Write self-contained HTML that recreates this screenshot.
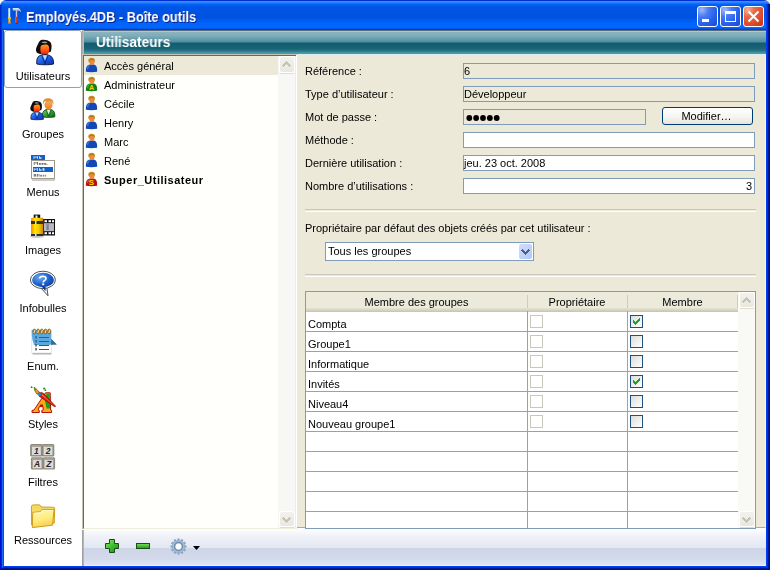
<!DOCTYPE html>
<html><head><meta charset="utf-8">
<style>
*{margin:0;padding:0;box-sizing:border-box}
html,body{width:770px;height:570px;overflow:hidden;background:#fff}
body{position:relative;font-family:"Liberation Sans",sans-serif;font-size:11px;color:#000}
.a{position:absolute}
svg{position:absolute;overflow:visible}
#win{left:0;top:8px;width:770px;height:562px;background:#0a52e0}
#crn{left:762px;top:0;width:8px;height:8px;background:#f2eed8}
#title{left:0;top:0;width:770px;height:30px;border-radius:6px 6px 0 0;background:linear-gradient(#0030d0 0px,#0030d0 1px,#3a8cff 1px,#3a8cff 2px,#2a80ff 2px,#2a80ff 3px,#1070ff 3px,#1070ff 4px,#0062f6 4px,#0062f6 5px,#005cee 5px,#005cee 6px,#0058e8 6px,#0058e8 7px,#0054e4 7px,#0054e4 12px,#0052e2 12px,#0052e2 18px,#0056e6 18px,#0056e6 19px,#005cf0 19px,#005cf0 22px,#0062f8 22px,#0062f8 23px,#0066fc 23px,#0066fc 27px,#0066fc 27px,#0066fc 28px,#0056ee 28px,#0056ee 29px,#0040d4 29px,#0040d4 30px)}
#ttxt{left:26px;top:9px;color:#fff;font-weight:bold;font-size:14.5px;text-shadow:1px 1px 0 #0a1e8a;white-space:nowrap;transform:scaleX(0.88);transform-origin:0 0}
#lb{left:0;top:30px;width:4px;height:540px;clip-path:polygon(0 0,4px 0,4px 536px,0 540px);background:linear-gradient(90deg,#0010d0 0,#0010d0 1px,#0828d0 1px,#0828d0 2px,#1a6af0 2px,#1a6af0 3px,#0050e0 3px)}
#rb{left:766px;top:4px;width:4px;height:566px;clip-path:polygon(0 0,4px 0,4px 566px,0 562px);background:linear-gradient(90deg,#0040f0 0,#0040f0 1px,#0030d8 1px,#0030d8 2px,#001898 2px,#001898 3px,#000c80 3px)}
#bb{left:0;top:566px;width:770px;height:4px;background:linear-gradient(#0040f0 0,#0040f0 1px,#0030d0 1px,#0030d0 2px,#001890 2px,#001890 3px,#001080 3px)}
#side{left:4px;top:30px;width:78px;height:536px;background:#fff}
#sel{left:4px;top:30px;width:78px;height:58px;border:1px solid #8aa4bc;border-radius:3px;background:#fff}
.sl{width:78px;text-align:center;left:4px;font-size:11px}
#vsep{left:82px;top:30px;width:2px;height:536px;background:linear-gradient(90deg,#b0aca8 0,#b0aca8 1px,#bcb8b0 1px)}
#hdr{left:84px;top:30px;width:682px;height:24px;
background:linear-gradient(#5a6a78 0,#5a6a78 1px,#b8c6c8 1px,#b8c6c8 2px,#8ab4c0 2px,#7eacb8 6px,#4e8ea0 12px,#135c70 13px,#1a6478 19px,#2a7888 21px,#4a9aa8 23px,#40a0b8 24px)}
#htxt{left:96px;top:34px;color:#fff;font-weight:bold;font-size:14px;white-space:nowrap;transform:scaleX(0.975);transform-origin:0 0}
#list{left:82px;top:54px;width:215px;height:475px;background:#fffffc;border-top:1px solid #c4c0b2;border-left:1px solid #c4c0b2}
#list2{left:83px;top:55px;width:214px;height:474px;border-top:1px solid #6e685c;border-left:1px solid #6e685c;border-bottom:1px solid #f0ecdc}
#hl{left:297px;top:54px;width:469px;height:1px;background:#d8ecec}
#rsel{left:84px;top:56px;width:194px;height:19px;background:#ece9d8}
.li{left:104px;white-space:nowrap}
#sb{left:278px;top:56px;width:18px;height:472px;background:linear-gradient(90deg,#f7f7f6 0,#f7f7f6 17px,#eeede0 17px)}
#wl{left:296px;top:55px;width:1px;height:473px;background:#fff}
#form{left:297px;top:55px;width:469px;height:473px;background:#ece9d8;border-bottom:1px solid #a8a8b0;border-right:1px solid #fff4d8}
.lab{left:305px;white-space:nowrap}
.fld{left:463px;width:292px;height:16px;border:1px solid #7f9db9;background:#fff;padding-left:0;line-height:14px;white-space:nowrap}
.dis{background:#ece9d8}
.sep{left:305px;width:451px;height:3px;border-top:1px solid #ccc8b8;border-bottom:1px solid #fff}
#btn{left:662px;top:107px;width:91px;height:18px;border:1px solid #003c74;border-radius:3px;background:linear-gradient(#fff,#f4f4f0 60%,#e6e4dc);text-align:center;line-height:16px;padding-right:2px}
#dd{left:325px;top:242px;width:209px;height:19px;border:1px solid #7f9db9;background:#fff;padding-left:2px;line-height:17px}
#ddb{left:519px;top:244px;width:13px;height:15px;border-radius:2px;background:linear-gradient(135deg,#d0dcfc,#b4c8f8)}
#tbl{left:305px;top:291px;width:451px;height:238px;border:1px solid #7f9db9;background:#fff}
#th{left:306px;top:292px;width:432px;height:20px;background:linear-gradient(#ebeadb 0,#ebeadb 16px,#e4e0d0 16px,#e4e0d0 17px,#dcd8c6 17px,#dcd8c6 18px,#d4d0be 18px,#d4d0be 19px,#cbc7b5 19px)}
.tc{text-align:center;white-space:nowrap}
.rl{left:306px;width:432px;height:1px;background:#a0a0a0}
.cl{top:311px;width:1px;height:217px;background:#a0a0a0}
.td{left:308px;white-space:nowrap}
#tb{left:84px;top:528px;width:682px;height:38px;background:linear-gradient(#fdfdfe 0,#fbfcfd 2px,#f0f2f8 8px,#e4e8f2 19px,#e2e6f2 20px,#cdd5e6 20px,#d2d9ea 30px,#dfe4f2 37px,#f0f0f8 37px)}
.tbtn{width:21px;height:21px;border:1px solid #fff;border-radius:3px}
.sl,.li,.lab,.fld,.tc,.td,#btn,#dd,#ttxt,#htxt{will-change:transform}
.cbd{width:13px;height:13px;border:1px solid #cac8bb;background:#fff}
.cbe{width:13px;height:13px;border:1px solid #1c5180;background:linear-gradient(135deg,#dcdcd7,#fff)}
</style></head><body>
<div id="crn" class="a"></div><div id="win" class="a"></div>
<div id="title" class="a"></div>
<svg style="left:0;top:0" width="30" height="30">
<rect x="8.6" y="8.2" width="1.6" height="9" fill="#e0e0ea"/>
<rect x="8.6" y="8.2" width="0.7" height="9" fill="#ffffff"/>
<path d="M7.9 17 H10.9 V18.6 L10.4 19.2 V22.6 L10.9 23.6 H7.9 L8.4 22.6 V19.2 L7.9 18.6Z" fill="#ffc800"/>
<rect x="7.9" y="22.6" width="3" height="1" fill="#e06000"/>
<path d="M12.8 8.2 H18.6 Q20.8 8.8 20.8 12.2 Q19.8 10.6 18.2 10.6 H17.2 V17 H15.8 V10.6 H12.8Z" fill="#c8c8d4"/>
<rect x="12.8" y="8.2" width="5.8" height="0.8" fill="#f0f0f8"/>
<rect x="15.2" y="16.8" width="2.8" height="6.8" fill="#e02808"/>
<rect x="15.2" y="16.8" width="1" height="6.8" fill="#ff5030"/>
<rect x="15.2" y="22.8" width="2.8" height="0.8" fill="#901000"/>
</svg>
<div id="ttxt" class="a">Employés.4DB - Boîte outils</div>
<div class="a tbtn" style="left:697px;top:6px;background:radial-gradient(circle at 20% 15%,#a0b8fa 0,#4a7cf2 30%,#2a62ec 60%,#1848d8 100%)"></div>
<div class="a" style="left:702px;top:19px;width:7px;height:3px;background:#fff"></div>
<div class="a tbtn" style="left:720px;top:6px;background:radial-gradient(circle at 20% 15%,#a0b8fa 0,#4a7cf2 30%,#2a62ec 60%,#1848d8 100%)"></div>
<div class="a" style="left:725px;top:11px;width:11px;height:11px;border:1px solid #fff;border-top-width:3px"></div>
<div class="a tbtn" style="left:743px;top:6px;background:radial-gradient(circle at 20% 15%,#f8b098 0,#e86a48 30%,#e05030 60%,#c83010 100%)"></div>
<svg style="left:743px;top:6px" width="21" height="21"><path d="M5.5 5.5 L15.5 15.5 M15.5 5.5 L5.5 15.5" stroke="#fff" stroke-width="2"/></svg>
<div class="a" style="left:0;top:5px;width:2px;height:25px;background:linear-gradient(90deg,#0028c8 0,#0028c8 1px,#0040dc 1px)"></div><div id="bb" class="a"></div><div id="lb" class="a"></div><div id="rb" class="a"></div>
<div id="tb" class="a"></div>
<div id="side" class="a"></div>
<div id="sel" class="a"></div>
<div class="a sl" style="top:70px">Utilisateurs</div>
<div class="a sl" style="top:128px">Groupes</div>
<div class="a sl" style="top:186px">Menus</div>
<div class="a sl" style="top:244px">Images</div>
<div class="a sl" style="top:302px">Infobulles</div>
<div class="a sl" style="top:360px">Enum.</div>
<div class="a sl" style="top:418px">Styles</div>
<div class="a sl" style="top:476px">Filtres</div>
<div class="a sl" style="top:534px">Ressources</div>
<svg style="left:27px;top:35px" width="32" height="32"><defs>
<linearGradient id="gface" x1="0" y1="0" x2="0" y2="1"><stop offset="0" stop-color="#ff9a20"/><stop offset="0.6" stop-color="#ff4a10"/><stop offset="1" stop-color="#e80808"/></linearGradient>
<linearGradient id="gbody" x1="0" y1="0" x2="1" y2="1"><stop offset="0" stop-color="#5aa0ff"/><stop offset="0.5" stop-color="#1a5ae8"/><stop offset="1" stop-color="#0a30a8"/></linearGradient>
<linearGradient id="gman" x1="0" y1="0" x2="0" y2="1"><stop offset="0" stop-color="#ffb060"/><stop offset="1" stop-color="#f08020"/></linearGradient>
<linearGradient id="ggreen" x1="0" y1="0" x2="1" y2="1"><stop offset="0" stop-color="#80d080"/><stop offset="0.5" stop-color="#30a030"/><stop offset="1" stop-color="#106010"/></linearGradient>
<linearGradient id="gcan" x1="0" y1="0" x2="1" y2="0"><stop offset="0" stop-color="#ff9000"/><stop offset="0.15" stop-color="#ffa800"/><stop offset="0.3" stop-color="#ffe800"/><stop offset="0.6" stop-color="#f8d000"/><stop offset="1" stop-color="#c88000"/></linearGradient>
<radialGradient id="gbub" cx="0.35" cy="0.35" r="0.8"><stop offset="0" stop-color="#6aaaf0"/><stop offset="0.6" stop-color="#1a5cc8"/><stop offset="1" stop-color="#0a3a98"/></radialGradient>
<linearGradient id="gfold" x1="0" y1="0" x2="0.3" y2="1"><stop offset="0" stop-color="#fff8b0"/><stop offset="0.6" stop-color="#ffec80"/><stop offset="1" stop-color="#f8d050"/></linearGradient>
</defs><g transform="translate(0,0) scale(1.0)">
<path d="M13.6 5.2 C17 4.3 21 5 23 6.8 C24.5 8.3 24.8 11 24.4 13.5 C24.2 15 24 16 23.6 16.8 L21.5 17.5 L13 18.9 C11 18.7 9.3 17.6 9 15.5 C8.8 13.5 9.8 11.5 10.8 9.5 C11.6 7.5 12.4 6 13.6 5.2 Z" fill="#0c0c0c"/>
<path d="M14.4 7.2 C16 6 19.5 6.2 20.5 7.5 C19.5 8.5 16 8.8 14.4 7.2Z" fill="#9a9a9a"/>
<path d="M13.4 13 C13.4 10.5 15 9.6 17 9.8 C18 9.5 19.5 9.3 20.5 9.8 C21.8 10.5 22.2 12 22.2 14 C22.2 18 20.5 20.5 17.8 20.5 C15 20.5 13.4 18 13.4 15Z" fill="url(#gface)"/>
<path d="M9.8 29 C9.5 25 10 22 12.8 20.6 C14.3 19.8 16 19.6 17.8 19.7 C19.5 19.6 21.3 19.8 22.8 20.6 C25.8 22 26.6 25 26.6 29 C23 30 13.5 30 9.8 29Z" fill="url(#gbody)" stroke="#06123a" stroke-width="0.9"/>
<path d="M15.8 20.2 L18 25.5 L20.1 20.2Z" fill="#a8e8ff"/>
<path d="M14.8 20.3 L18 28.8 M21.1 20.3 L18 28.8" stroke="#0a1a70" stroke-width="0.8"/>
</g></svg>
<svg style="left:27px;top:93px" width="32" height="32">
<path d="M15.4 23.8 C15.1 20.5 15.8 18.2 18.2 17 C19.5 16.4 20.5 16.3 21.6 16.3 C22.8 16.3 24 16.4 25.2 17 C27.4 18.2 28 20.5 27.8 23.8 C25 24.6 18.2 24.6 15.4 23.8Z" fill="url(#ggreen)" stroke="#063a08" stroke-width="0.8"/>
<path d="M19.8 16.6 L21.6 21.5 L23.4 16.6Z" fill="#d8f0ff"/>
<path d="M19 16.8 L21.6 23.8 M24.2 16.8 L21.6 23.8" stroke="#0a5010" stroke-width="0.6"/>
<ellipse cx="21.5" cy="11.8" rx="3.8" ry="4.6" fill="url(#gman)" stroke="#c06a10" stroke-width="0.3"/>
<path d="M16.2 11.5 C15.6 8 16.5 5.5 20.5 5.3 C24.8 5 26.8 7.2 26.4 11.5 L25.2 9.5 C24.5 8.5 23.8 8 23 8.2 C21.5 8.8 19.5 8.5 18.2 8 C17.2 8.5 16.8 9.5 16.2 11.5Z" fill="#d89438"/>
<g transform="translate(-3.45,4.45) scale(0.75)">
<path d="M13.6 5.2 C17 4.3 21 5 23 6.8 C24.5 8.3 24.8 11 24.4 13.5 C24.2 15 24 16 23.6 16.8 L21.5 17.5 L13 18.9 C11 18.7 9.3 17.6 9 15.5 C8.8 13.5 9.8 11.5 10.8 9.5 C11.6 7.5 12.4 6 13.6 5.2 Z" fill="#0c0c0c"/>
<path d="M14.4 7.2 C16 6 19.5 6.2 20.5 7.5 C19.5 8.5 16 8.8 14.4 7.2Z" fill="#9a9a9a"/>
<path d="M13.4 13 C13.4 10.5 15 9.6 17 9.8 C18 9.5 19.5 9.3 20.5 9.8 C21.8 10.5 22.2 12 22.2 14 C22.2 18 20.5 20.5 17.8 20.5 C15 20.5 13.4 18 13.4 15Z" fill="url(#gface)"/>
<path d="M9.8 29 C9.5 25 10 22 12.8 20.6 C14.3 19.8 16 19.6 17.8 19.7 C19.5 19.6 21.3 19.8 22.8 20.6 C25.8 22 26.6 25 26.6 29 C23 30 13.5 30 9.8 29Z" fill="url(#gbody)" stroke="#06123a" stroke-width="0.9"/>
<path d="M15.8 20.2 L18 25.5 L20.1 20.2Z" fill="#a8e8ff"/>
<path d="M14.8 20.3 L18 28.8 M21.1 20.3 L18 28.8" stroke="#0a1a70" stroke-width="0.8"/>
</g>
</svg>
<svg style="left:27px;top:151px" width="32" height="32">
<rect x="5" y="28" width="23" height="2" fill="#a8a8a8" opacity="0.6"/>
<rect x="4" y="4" width="14" height="5" fill="#1060c8"/>
<g fill="#d0dcf0"><rect x="6.5" y="5.2" width="1" height="2.6"/><rect x="7.5" y="5.6" width="2.5" height="1"/><rect x="10" y="5.2" width="1" height="2.6"/><rect x="12" y="5.2" width="1" height="2.6"/><rect x="13" y="6.3" width="1.5" height="1.5"/></g>
<rect x="4.5" y="9.5" width="23" height="18" fill="#fff" stroke="#a09a88" stroke-width="1"/>
<g fill="#707070"><rect x="6.7" y="11" width="1" height="2.8"/><rect x="7.7" y="11.4" width="2.3" height="1"/><rect x="10" y="11" width="1" height="2.8"/><rect x="11.8" y="12" width="2" height="1.8"/><rect x="14.5" y="12" width="2" height="1.8"/><rect x="17.2" y="12" width="2" height="1.8"/><rect x="19.5" y="13" width="1" height="0.8"/></g>
<rect x="6" y="16" width="20" height="5" fill="#1060c8"/>
<g fill="#d0dcf0"><rect x="6.7" y="17.2" width="1" height="2.6"/><rect x="7.7" y="17.6" width="2.3" height="1"/><rect x="10" y="17.2" width="1" height="2.6"/><rect x="12" y="17.2" width="1" height="2.6"/><rect x="13" y="18.3" width="1.5" height="1.5"/><rect x="15.5" y="17.2" width="2" height="2.6"/></g>
<g fill="#808080"><rect x="6.7" y="23" width="2.6" height="2.6"/><rect x="10" y="23" width="1" height="2.6"/><rect x="11.5" y="23" width="1" height="2.6"/><rect x="13.2" y="23.8" width="1.8" height="1.8"/><rect x="15.8" y="23.8" width="1.6" height="1.8"/><rect x="18.2" y="23.8" width="1" height="1.8"/></g>
</svg>
<svg style="left:27px;top:209px" width="32" height="32">
<ellipse cx="10" cy="27.5" rx="7" ry="1.5" fill="#a0a0a0" opacity="0.6"/>
<rect x="16" y="10" width="12" height="16.5" fill="#101010"/>
<rect x="17.5" y="11.2" width="2.5" height="2" fill="#fff"/><rect x="21.5" y="11.2" width="2.5" height="2" fill="#fff"/><rect x="25" y="11.2" width="2" height="2" fill="#fff"/>
<rect x="17.5" y="23.2" width="2.5" height="2" fill="#fff"/><rect x="21.5" y="23.2" width="2.5" height="2" fill="#fff"/><rect x="25" y="23.2" width="2" height="2" fill="#fff"/>
<rect x="17" y="14.2" width="10" height="8" fill="#b8b8b8"/>
<rect x="19.5" y="15" width="2.2" height="6" fill="#6080c0"/><circle cx="20.5" cy="15.8" r="1" fill="#e07070"/>
<rect x="6.7" y="5.6" width="6.5" height="3.6" fill="#101010"/>
<rect x="8.5" y="6.5" width="2" height="2.5" fill="#e8e8e8"/>
<rect x="4" y="8.7" width="12.3" height="18.3" rx="1" fill="url(#gcan)"/>
<rect x="4" y="12" width="12.3" height="3" fill="#303030"/>
<rect x="8" y="12" width="1.5" height="3" fill="#e0e0e0"/>
<rect x="4" y="25" width="12.3" height="2" fill="#303030"/>
<rect x="8" y="25" width="1.5" height="2" fill="#e0e0e0"/>
</svg>
<svg style="left:27px;top:267px" width="32" height="32">
<path d="M13.5 20.5 L21 28.8 L19.8 20Z" fill="#fff" stroke="#505050" stroke-width="1"/>
<ellipse cx="15.9" cy="12.9" rx="12.5" ry="8.7" fill="#fff" stroke="#505050" stroke-width="1"/>
<ellipse cx="16" cy="13" rx="11" ry="7.2" fill="url(#gbub)"/>
<path d="M15 19.8 L18.6 24.5 L18.5 19.8Z" fill="#0a3a98"/>
<path d="M12.6 11.6 C12.6 8.8 19 8.5 19 11.4 C19 13.5 16.2 13.4 16.2 15.5" fill="none" stroke="#fff" stroke-width="1.6"/>
<rect x="15.2" y="16.4" width="2" height="1.8" fill="#fff"/>
</svg>
<svg style="left:27px;top:325px" width="32" height="32">
<rect x="5.5" y="28" width="19" height="1.5" fill="#909090" opacity="0.7"/>
<rect x="4.8" y="5" width="19.4" height="23" fill="#fff" stroke="#d0d0d0" stroke-width="0.5"/>
<path d="M4.8 5 H24.2 V14 L29.8 19.5 H24 L22 20 H7 Q5 15 4.8 10Z" fill="#5aaae0"/>
<path d="M24.2 14 L29.8 19.5 L24 19.8Z" fill="#3a6a90"/>
<g fill="#d89018" stroke="#6a4000" stroke-width="0.5">
<rect x="6.2" y="4" width="2.4" height="5" rx="1.2"/><rect x="9.9" y="4" width="2.4" height="5" rx="1.2"/><rect x="13.6" y="4" width="2.4" height="5" rx="1.2"/><rect x="17.3" y="4" width="2.4" height="5" rx="1.2"/><rect x="21" y="4" width="2.4" height="5" rx="1.2"/>
</g>
<g stroke="#fff0c0" stroke-width="0.8">
<path d="M6.8 8 L8.2 5"/><path d="M10.5 8 L11.9 5"/><path d="M14.2 8 L15.6 5"/><path d="M17.9 8 L19.3 5"/><path d="M21.6 8 L23 5"/>
</g>
<rect x="12" y="12" width="10" height="0.9" fill="#1a5a90"/>
<rect x="12" y="16" width="10" height="0.9" fill="#1a5a90"/>
<rect x="12" y="20" width="10" height="0.9" fill="#404040"/>
<rect x="12" y="24" width="10" height="0.9" fill="#404040"/>
<rect x="8.3" y="11" width="1.5" height="2.5" fill="#2a6a9a"/><rect x="8.3" y="15" width="1.5" height="2.5" fill="#2a6a9a"/>
<rect x="8.3" y="19" width="1.5" height="2.5" fill="#505050"/><rect x="8.3" y="23" width="1.5" height="2.5" fill="#505050"/>
</svg>
<svg style="left:27px;top:383px" width="32" height="32">
<path d="M5 29.5 L5 27.5 L7 27 L18.5 9.8 L23.2 9.8 L23.6 27 L24.6 27.5 L24.6 29.5 L14.8 29.5 L14.8 27.5 L16.2 27 L16 23.6 L12.4 23.6 L11.2 27 L12.3 27.5 L12.3 29.5Z" fill="#f8a818" stroke="#b00800" stroke-width="0.95" stroke-linejoin="round"/>
<path d="M13.3 21.6 L16 21.6 L16.1 23.6 L12.5 23.6Z" fill="#c00800"/>
<path d="M19.8 10.4 L22.7 10.4 L23.1 25.5 L19.6 25.5 L17.6 16Z" fill="#1aa01a"/>
<path d="M12.4 10.2 C14 8.8 15.5 9.4 17 10.8 L28.8 23.4 L27.6 23.7 L12 13.2Z" fill="#e01808" stroke="#800800" stroke-width="0.6"/>
<path d="M14.2 12 L27.5 23 L15.5 11.2Z" fill="#ff8a70" opacity="0.7"/>
<path d="M11.8 8.6 L14.8 11.3 L12.8 13.4 L10 10.6Z" fill="#1890e0" stroke="#0a4a80" stroke-width="0.4"/>
<path d="M7 4.2 C7.4 7 8.2 9.2 9.6 10.6 C10.6 11.3 11.6 10.9 12.1 9.8 C11.2 7.6 9.6 5.6 7 4.2Z" fill="#e89a20" stroke="#704000" stroke-width="0.6"/>
<path d="M7 4.2 L9.2 6.6 L8 8Z" fill="#30a030"/>
<circle cx="4.6" cy="4.2" r="0.9" fill="#208a20"/>
<circle cx="17.2" cy="5.5" r="1.1" fill="#208a20"/><circle cx="18.4" cy="7.2" r="0.9" fill="#208a20"/>
</svg>
<svg style="left:27px;top:441px" width="32" height="32"><rect x="3.1" y="3.1" width="12.5" height="12.3" rx="1.5" fill="#8e8a7c"/><rect x="4.3" y="4.1" width="10.1" height="2" fill="#a8a496"/><rect x="4.9" y="5.9" width="8.9" height="8.2" fill="#dcdcdc"/><text x="9.3" y="12.9" font-family="Liberation Sans" font-style="italic" font-weight="bold" font-size="8.5" text-anchor="middle" fill="#282828">1</text><rect x="14.8" y="3.1" width="12.5" height="12.3" rx="1.5" fill="#8e8a7c"/><rect x="16.0" y="4.1" width="10.1" height="2" fill="#a8a496"/><rect x="16.6" y="5.9" width="8.9" height="8.2" fill="#dcdcdc"/><text x="21.0" y="12.9" font-family="Liberation Sans" font-style="italic" font-weight="bold" font-size="8.5" text-anchor="middle" fill="#282828">2</text><rect x="3.9" y="16.3" width="12.5" height="12.3" rx="1.5" fill="#8e8a7c"/><rect x="5.1" y="17.3" width="10.1" height="2" fill="#a8a496"/><rect x="5.7" y="19.1" width="8.9" height="8.2" fill="#dcdcdc"/><text x="10.1" y="26.1" font-family="Liberation Sans" font-style="italic" font-weight="bold" font-size="8.5" text-anchor="middle" fill="#282828">A</text><rect x="15.6" y="16.3" width="12.5" height="12.3" rx="1.5" fill="#8e8a7c"/><rect x="16.8" y="17.3" width="10.1" height="2" fill="#a8a496"/><rect x="17.4" y="19.1" width="8.9" height="8.2" fill="#dcdcdc"/><text x="21.8" y="26.1" font-family="Liberation Sans" font-style="italic" font-weight="bold" font-size="8.5" text-anchor="middle" fill="#282828">Z</text></svg>
<svg style="left:27px;top:499px" width="32" height="32">
<path d="M4.6 26 L4.4 7.8 Q4.4 5.9 6.2 5.9 L12 5.8 Q13 5.8 13.6 7 L14.2 8 L26.5 8.2 Q27.8 8.3 27.7 9.8 L27.3 24 Z" fill="#f4d860" stroke="#c89818" stroke-width="0.9"/>
<path d="M5.3 28.6 L5.8 13.4 L13.2 12.8 L14.6 10.8 L27 10.4 L25.6 26.2 Z" fill="url(#gfold)" stroke="#c89410" stroke-width="0.9"/>
<path d="M6.6 14.2 L13.6 13.6 L15 11.6 L26 11.3" fill="none" stroke="#fffce0" stroke-width="0.8"/>
</svg>
<div id="vsep" class="a"></div>
<div id="hdr" class="a"></div>
<div id="htxt" class="a">Utilisateurs</div>
<div id="list" class="a"></div><div id="list2" class="a"></div><div id="hl" class="a"></div>
<div id="rsel" class="a"></div>
<div class="a li" style="top:60px;">Accès général</div>
<svg style="left:84px;top:56px" width="16" height="19">
<path d="M1.9 15.8 C1.5 11.5 2.8 9 5.8 8.4 L9.6 8.4 C12.5 9 13.4 11.5 13.1 15.8 C10 16.3 5 16.3 1.9 15.8Z" fill="#1048b8"/>
<path d="M3 13 C3 10.5 4 9.3 5.8 9 L6.5 9.2 C5 10 4.2 11.5 4.3 13.5Z" fill="#ffffff" opacity="0.25"/>
<ellipse cx="7.6" cy="4.4" rx="3.3" ry="2.6" fill="#c89028"/>
<ellipse cx="7.9" cy="6.1" rx="2.45" ry="2.8" fill="#f08838"/>
<path d="M5.2 4.6 C5.5 3 7 2.6 8.5 2.8 C9.8 3 10.5 3.8 10.6 4.8 L9.5 4.2 C8 3.8 6.5 4 5.2 4.6Z" fill="#b07818"/>
</svg>
<div class="a li" style="top:79px;">Administrateur</div>
<svg style="left:84px;top:75px" width="16" height="19">
<path d="M1.9 15.8 C1.5 11.5 2.8 9 5.8 8.4 L9.6 8.4 C12.5 9 13.4 11.5 13.1 15.8 C10 16.3 5 16.3 1.9 15.8Z" fill="#108010"/>
<path d="M3 13 C3 10.5 4 9.3 5.8 9 L6.5 9.2 C5 10 4.2 11.5 4.3 13.5Z" fill="#ffffff" opacity="0.25"/>
<ellipse cx="7.6" cy="4.4" rx="3.3" ry="2.6" fill="#c89028"/>
<ellipse cx="7.9" cy="6.1" rx="2.45" ry="2.8" fill="#f08838"/>
<path d="M5.2 4.6 C5.5 3 7 2.6 8.5 2.8 C9.8 3 10.5 3.8 10.6 4.8 L9.5 4.2 C8 3.8 6.5 4 5.2 4.6Z" fill="#b07818"/>
<text x="7.5" y="15" font-family="Liberation Sans" font-weight="bold" font-size="7" text-anchor="middle" fill="#ffd000">A</text></svg>
<div class="a li" style="top:98px;">Cécile</div>
<svg style="left:84px;top:94px" width="16" height="19">
<path d="M1.9 15.8 C1.5 11.5 2.8 9 5.8 8.4 L9.6 8.4 C12.5 9 13.4 11.5 13.1 15.8 C10 16.3 5 16.3 1.9 15.8Z" fill="#1048b8"/>
<path d="M3 13 C3 10.5 4 9.3 5.8 9 L6.5 9.2 C5 10 4.2 11.5 4.3 13.5Z" fill="#ffffff" opacity="0.25"/>
<ellipse cx="7.6" cy="4.4" rx="3.3" ry="2.6" fill="#c89028"/>
<ellipse cx="7.9" cy="6.1" rx="2.45" ry="2.8" fill="#f08838"/>
<path d="M5.2 4.6 C5.5 3 7 2.6 8.5 2.8 C9.8 3 10.5 3.8 10.6 4.8 L9.5 4.2 C8 3.8 6.5 4 5.2 4.6Z" fill="#b07818"/>
</svg>
<div class="a li" style="top:117px;">Henry</div>
<svg style="left:84px;top:113px" width="16" height="19">
<path d="M1.9 15.8 C1.5 11.5 2.8 9 5.8 8.4 L9.6 8.4 C12.5 9 13.4 11.5 13.1 15.8 C10 16.3 5 16.3 1.9 15.8Z" fill="#1048b8"/>
<path d="M3 13 C3 10.5 4 9.3 5.8 9 L6.5 9.2 C5 10 4.2 11.5 4.3 13.5Z" fill="#ffffff" opacity="0.25"/>
<ellipse cx="7.6" cy="4.4" rx="3.3" ry="2.6" fill="#c89028"/>
<ellipse cx="7.9" cy="6.1" rx="2.45" ry="2.8" fill="#f08838"/>
<path d="M5.2 4.6 C5.5 3 7 2.6 8.5 2.8 C9.8 3 10.5 3.8 10.6 4.8 L9.5 4.2 C8 3.8 6.5 4 5.2 4.6Z" fill="#b07818"/>
</svg>
<div class="a li" style="top:136px;">Marc</div>
<svg style="left:84px;top:132px" width="16" height="19">
<path d="M1.9 15.8 C1.5 11.5 2.8 9 5.8 8.4 L9.6 8.4 C12.5 9 13.4 11.5 13.1 15.8 C10 16.3 5 16.3 1.9 15.8Z" fill="#1048b8"/>
<path d="M3 13 C3 10.5 4 9.3 5.8 9 L6.5 9.2 C5 10 4.2 11.5 4.3 13.5Z" fill="#ffffff" opacity="0.25"/>
<ellipse cx="7.6" cy="4.4" rx="3.3" ry="2.6" fill="#c89028"/>
<ellipse cx="7.9" cy="6.1" rx="2.45" ry="2.8" fill="#f08838"/>
<path d="M5.2 4.6 C5.5 3 7 2.6 8.5 2.8 C9.8 3 10.5 3.8 10.6 4.8 L9.5 4.2 C8 3.8 6.5 4 5.2 4.6Z" fill="#b07818"/>
</svg>
<div class="a li" style="top:155px;">René</div>
<svg style="left:84px;top:151px" width="16" height="19">
<path d="M1.9 15.8 C1.5 11.5 2.8 9 5.8 8.4 L9.6 8.4 C12.5 9 13.4 11.5 13.1 15.8 C10 16.3 5 16.3 1.9 15.8Z" fill="#1048b8"/>
<path d="M3 13 C3 10.5 4 9.3 5.8 9 L6.5 9.2 C5 10 4.2 11.5 4.3 13.5Z" fill="#ffffff" opacity="0.25"/>
<ellipse cx="7.6" cy="4.4" rx="3.3" ry="2.6" fill="#c89028"/>
<ellipse cx="7.9" cy="6.1" rx="2.45" ry="2.8" fill="#f08838"/>
<path d="M5.2 4.6 C5.5 3 7 2.6 8.5 2.8 C9.8 3 10.5 3.8 10.6 4.8 L9.5 4.2 C8 3.8 6.5 4 5.2 4.6Z" fill="#b07818"/>
</svg>
<div class="a li" style="top:174px;font-weight:bold;letter-spacing:0.5px;">Super_Utilisateur</div>
<svg style="left:84px;top:170px" width="16" height="19">
<path d="M1.9 15.8 C1.5 11.5 2.8 9 5.8 8.4 L9.6 8.4 C12.5 9 13.4 11.5 13.1 15.8 C10 16.3 5 16.3 1.9 15.8Z" fill="#b81010"/>
<path d="M3 13 C3 10.5 4 9.3 5.8 9 L6.5 9.2 C5 10 4.2 11.5 4.3 13.5Z" fill="#ffffff" opacity="0.25"/>
<ellipse cx="7.6" cy="4.4" rx="3.3" ry="2.6" fill="#c89028"/>
<ellipse cx="7.9" cy="6.1" rx="2.45" ry="2.8" fill="#f08838"/>
<path d="M5.2 4.6 C5.5 3 7 2.6 8.5 2.8 C9.8 3 10.5 3.8 10.6 4.8 L9.5 4.2 C8 3.8 6.5 4 5.2 4.6Z" fill="#b07818"/>
<text x="7.5" y="15.3" font-family="Liberation Sans" font-weight="bold" font-size="8" text-anchor="middle" fill="#ffd000">S</text></svg>
<div id="sb" class="a"></div>
<div class="a" style="left:279px;top:56px;width:16px;height:17px;border:1px solid #fff;border-radius:3px;background:linear-gradient(#f2f1ec,#e9e8e0)"></div><div class="a" style="left:280px;top:73px;width:14px;height:1px;background:#e0decf"></div><svg style="left:282px;top:61px" width="9" height="6" shape-rendering="crispEdges"><rect x="4" y="0" width="1" height="1" fill="#c4c2b4"/><rect x="3" y="1" width="1" height="1" fill="#c4c2b4"/><rect x="4" y="1" width="1" height="1" fill="#c4c2b4"/><rect x="5" y="1" width="1" height="1" fill="#c4c2b4"/><rect x="2" y="2" width="1" height="1" fill="#c4c2b4"/><rect x="3" y="2" width="1" height="1" fill="#c4c2b4"/><rect x="4" y="2" width="1" height="1" fill="#c4c2b4"/><rect x="5" y="2" width="1" height="1" fill="#c4c2b4"/><rect x="6" y="2" width="1" height="1" fill="#c4c2b4"/><rect x="1" y="3" width="1" height="1" fill="#c4c2b4"/><rect x="2" y="3" width="1" height="1" fill="#c4c2b4"/><rect x="3" y="3" width="1" height="1" fill="#c4c2b4"/><rect x="5" y="3" width="1" height="1" fill="#c4c2b4"/><rect x="6" y="3" width="1" height="1" fill="#c4c2b4"/><rect x="7" y="3" width="1" height="1" fill="#c4c2b4"/><rect x="0" y="4" width="1" height="1" fill="#c4c2b4"/><rect x="1" y="4" width="1" height="1" fill="#c4c2b4"/><rect x="2" y="4" width="1" height="1" fill="#c4c2b4"/><rect x="6" y="4" width="1" height="1" fill="#c4c2b4"/><rect x="7" y="4" width="1" height="1" fill="#c4c2b4"/><rect x="8" y="4" width="1" height="1" fill="#c4c2b4"/><rect x="1" y="5" width="1" height="1" fill="#c4c2b4"/><rect x="7" y="5" width="1" height="1" fill="#c4c2b4"/></svg>
<div class="a" style="left:279px;top:511px;width:16px;height:16px;border:1px solid #fff;border-radius:3px;background:linear-gradient(#f2f1ec,#e9e8e0)"></div><div class="a" style="left:280px;top:527px;width:14px;height:1px;background:#e0decf"></div><svg style="left:282px;top:517px" width="9" height="6" shape-rendering="crispEdges"><rect x="1" y="0" width="1" height="1" fill="#c4c2b4"/><rect x="7" y="0" width="1" height="1" fill="#c4c2b4"/><rect x="0" y="1" width="1" height="1" fill="#c4c2b4"/><rect x="1" y="1" width="1" height="1" fill="#c4c2b4"/><rect x="2" y="1" width="1" height="1" fill="#c4c2b4"/><rect x="6" y="1" width="1" height="1" fill="#c4c2b4"/><rect x="7" y="1" width="1" height="1" fill="#c4c2b4"/><rect x="8" y="1" width="1" height="1" fill="#c4c2b4"/><rect x="1" y="2" width="1" height="1" fill="#c4c2b4"/><rect x="2" y="2" width="1" height="1" fill="#c4c2b4"/><rect x="3" y="2" width="1" height="1" fill="#c4c2b4"/><rect x="5" y="2" width="1" height="1" fill="#c4c2b4"/><rect x="6" y="2" width="1" height="1" fill="#c4c2b4"/><rect x="7" y="2" width="1" height="1" fill="#c4c2b4"/><rect x="2" y="3" width="1" height="1" fill="#c4c2b4"/><rect x="3" y="3" width="1" height="1" fill="#c4c2b4"/><rect x="4" y="3" width="1" height="1" fill="#c4c2b4"/><rect x="5" y="3" width="1" height="1" fill="#c4c2b4"/><rect x="6" y="3" width="1" height="1" fill="#c4c2b4"/><rect x="3" y="4" width="1" height="1" fill="#c4c2b4"/><rect x="4" y="4" width="1" height="1" fill="#c4c2b4"/><rect x="5" y="4" width="1" height="1" fill="#c4c2b4"/><rect x="4" y="5" width="1" height="1" fill="#c4c2b4"/></svg>
<div id="wl" class="a"></div>
<div id="form" class="a"></div>
<div class="a lab" style="top:65px">Référence :</div>
<div class="a lab" style="top:88px">Type d’utilisateur :</div>
<div class="a lab" style="top:111px">Mot de passe :</div>
<div class="a lab" style="top:134px">Méthode :</div>
<div class="a lab" style="top:157px">Dernière utilisation :</div>
<div class="a lab" style="top:180px">Nombre d’utilisations :</div>
<div class="a fld dis" style="top:63px">6</div>
<div class="a fld dis" style="top:86px">Développeur</div>
<div class="a fld dis" style="top:109px;width:183px"></div>
<svg style="left:465.5px;top:113.5px" width="40" height="8"><circle cx="3.3" cy="4" r="2.9" fill="#000"/><circle cx="10.149999999999999" cy="4" r="2.9" fill="#000"/><circle cx="17.0" cy="4" r="2.9" fill="#000"/><circle cx="23.849999999999998" cy="4" r="2.9" fill="#000"/><circle cx="30.7" cy="4" r="2.9" fill="#000"/></svg>
<div id="btn" class="a">Modifier…</div>
<div class="a fld" style="top:132px"></div>
<div class="a fld" style="top:155px">jeu. 23 oct. 2008</div>
<div class="a fld" style="top:178px;text-align:right;padding-right:2px">3</div>
<div class="a sep" style="top:209px"></div>
<div class="a lab" style="top:222px">Propriétaire par défaut des objets créés par cet utilisateur :</div>
<div id="dd" class="a">Tous les groupes</div>
<div id="ddb" class="a"></div>
<svg style="left:521px;top:249px" width="9" height="6" shape-rendering="crispEdges"><rect x="1" y="0" width="1" height="1" fill="#4d6185"/><rect x="7" y="0" width="1" height="1" fill="#4d6185"/><rect x="0" y="1" width="1" height="1" fill="#4d6185"/><rect x="1" y="1" width="1" height="1" fill="#4d6185"/><rect x="2" y="1" width="1" height="1" fill="#4d6185"/><rect x="6" y="1" width="1" height="1" fill="#4d6185"/><rect x="7" y="1" width="1" height="1" fill="#4d6185"/><rect x="8" y="1" width="1" height="1" fill="#4d6185"/><rect x="1" y="2" width="1" height="1" fill="#4d6185"/><rect x="2" y="2" width="1" height="1" fill="#4d6185"/><rect x="3" y="2" width="1" height="1" fill="#4d6185"/><rect x="5" y="2" width="1" height="1" fill="#4d6185"/><rect x="6" y="2" width="1" height="1" fill="#4d6185"/><rect x="7" y="2" width="1" height="1" fill="#4d6185"/><rect x="2" y="3" width="1" height="1" fill="#4d6185"/><rect x="3" y="3" width="1" height="1" fill="#4d6185"/><rect x="4" y="3" width="1" height="1" fill="#4d6185"/><rect x="5" y="3" width="1" height="1" fill="#4d6185"/><rect x="6" y="3" width="1" height="1" fill="#4d6185"/><rect x="3" y="4" width="1" height="1" fill="#4d6185"/><rect x="4" y="4" width="1" height="1" fill="#4d6185"/><rect x="5" y="4" width="1" height="1" fill="#4d6185"/><rect x="4" y="5" width="1" height="1" fill="#4d6185"/></svg>
<div class="a sep" style="top:274px"></div>
<div id="tbl" class="a"></div>
<div id="th" class="a"></div>
<div class="a tc" style="left:306px;width:221px;top:296px">Membre des groupes</div>
<div class="a tc" style="left:527px;width:100px;top:296px">Propriétaire</div>
<div class="a tc" style="left:627px;width:111px;top:296px">Membre</div>
<div class="a" style="left:527px;top:295px;width:1px;height:13px;background:#d0ccbc"></div>
<div class="a" style="left:627px;top:295px;width:1px;height:13px;background:#d0ccbc"></div>
<div class="a" style="left:737px;top:295px;width:1px;height:13px;background:#d0ccbc"></div>
<div class="a rl" style="top:331px"></div>
<div class="a rl" style="top:351px"></div>
<div class="a rl" style="top:371px"></div>
<div class="a rl" style="top:391px"></div>
<div class="a rl" style="top:411px"></div>
<div class="a rl" style="top:431px"></div>
<div class="a rl" style="top:451px"></div>
<div class="a rl" style="top:471px"></div>
<div class="a rl" style="top:491px"></div>
<div class="a rl" style="top:511px"></div>
<div class="a cl" style="left:527px"></div>
<div class="a cl" style="left:627px"></div>
<div class="a td" style="top:318px">Compta</div>
<div class="a cbd" style="left:530px;top:315px"></div>
<div class="a cbe" style="left:630px;top:315px"></div>
<svg style="left:633px;top:318px" width="7" height="7" shape-rendering="crispEdges"><rect x="6" y="0" width="1" height="1" fill="#21a121"/><rect x="5" y="1" width="1" height="1" fill="#21a121"/><rect x="6" y="1" width="1" height="1" fill="#21a121"/><rect x="0" y="2" width="1" height="1" fill="#21a121"/><rect x="4" y="2" width="1" height="1" fill="#21a121"/><rect x="5" y="2" width="1" height="1" fill="#21a121"/><rect x="6" y="2" width="1" height="1" fill="#21a121"/><rect x="0" y="3" width="1" height="1" fill="#21a121"/><rect x="1" y="3" width="1" height="1" fill="#21a121"/><rect x="3" y="3" width="1" height="1" fill="#21a121"/><rect x="4" y="3" width="1" height="1" fill="#21a121"/><rect x="5" y="3" width="1" height="1" fill="#21a121"/><rect x="0" y="4" width="1" height="1" fill="#21a121"/><rect x="1" y="4" width="1" height="1" fill="#21a121"/><rect x="2" y="4" width="1" height="1" fill="#21a121"/><rect x="3" y="4" width="1" height="1" fill="#21a121"/><rect x="4" y="4" width="1" height="1" fill="#21a121"/><rect x="1" y="5" width="1" height="1" fill="#21a121"/><rect x="2" y="5" width="1" height="1" fill="#21a121"/><rect x="3" y="5" width="1" height="1" fill="#21a121"/><rect x="2" y="6" width="1" height="1" fill="#21a121"/></svg>
<div class="a td" style="top:338px">Groupe1</div>
<div class="a cbd" style="left:530px;top:335px"></div>
<div class="a cbe" style="left:630px;top:335px"></div>
<div class="a td" style="top:358px">Informatique</div>
<div class="a cbd" style="left:530px;top:355px"></div>
<div class="a cbe" style="left:630px;top:355px"></div>
<div class="a td" style="top:378px">Invités</div>
<div class="a cbd" style="left:530px;top:375px"></div>
<div class="a cbe" style="left:630px;top:375px"></div>
<svg style="left:633px;top:378px" width="7" height="7" shape-rendering="crispEdges"><rect x="6" y="0" width="1" height="1" fill="#21a121"/><rect x="5" y="1" width="1" height="1" fill="#21a121"/><rect x="6" y="1" width="1" height="1" fill="#21a121"/><rect x="0" y="2" width="1" height="1" fill="#21a121"/><rect x="4" y="2" width="1" height="1" fill="#21a121"/><rect x="5" y="2" width="1" height="1" fill="#21a121"/><rect x="6" y="2" width="1" height="1" fill="#21a121"/><rect x="0" y="3" width="1" height="1" fill="#21a121"/><rect x="1" y="3" width="1" height="1" fill="#21a121"/><rect x="3" y="3" width="1" height="1" fill="#21a121"/><rect x="4" y="3" width="1" height="1" fill="#21a121"/><rect x="5" y="3" width="1" height="1" fill="#21a121"/><rect x="0" y="4" width="1" height="1" fill="#21a121"/><rect x="1" y="4" width="1" height="1" fill="#21a121"/><rect x="2" y="4" width="1" height="1" fill="#21a121"/><rect x="3" y="4" width="1" height="1" fill="#21a121"/><rect x="4" y="4" width="1" height="1" fill="#21a121"/><rect x="1" y="5" width="1" height="1" fill="#21a121"/><rect x="2" y="5" width="1" height="1" fill="#21a121"/><rect x="3" y="5" width="1" height="1" fill="#21a121"/><rect x="2" y="6" width="1" height="1" fill="#21a121"/></svg>
<div class="a td" style="top:398px">Niveau4</div>
<div class="a cbd" style="left:530px;top:395px"></div>
<div class="a cbe" style="left:630px;top:395px"></div>
<div class="a td" style="top:418px">Nouveau groupe1</div>
<div class="a cbd" style="left:530px;top:415px"></div>
<div class="a cbe" style="left:630px;top:415px"></div>
<div class="a" style="left:738px;top:292px;width:17px;height:236px;background:#f9f9f6"></div>
<div class="a" style="left:739px;top:292px;width:16px;height:16px;border:1px solid #fff;border-radius:3px;background:linear-gradient(#f2f1ec,#e9e8e0)"></div><div class="a" style="left:740px;top:308px;width:14px;height:1px;background:#e0decf"></div><svg style="left:742px;top:297px" width="9" height="6" shape-rendering="crispEdges"><rect x="4" y="0" width="1" height="1" fill="#c4c2b4"/><rect x="3" y="1" width="1" height="1" fill="#c4c2b4"/><rect x="4" y="1" width="1" height="1" fill="#c4c2b4"/><rect x="5" y="1" width="1" height="1" fill="#c4c2b4"/><rect x="2" y="2" width="1" height="1" fill="#c4c2b4"/><rect x="3" y="2" width="1" height="1" fill="#c4c2b4"/><rect x="4" y="2" width="1" height="1" fill="#c4c2b4"/><rect x="5" y="2" width="1" height="1" fill="#c4c2b4"/><rect x="6" y="2" width="1" height="1" fill="#c4c2b4"/><rect x="1" y="3" width="1" height="1" fill="#c4c2b4"/><rect x="2" y="3" width="1" height="1" fill="#c4c2b4"/><rect x="3" y="3" width="1" height="1" fill="#c4c2b4"/><rect x="5" y="3" width="1" height="1" fill="#c4c2b4"/><rect x="6" y="3" width="1" height="1" fill="#c4c2b4"/><rect x="7" y="3" width="1" height="1" fill="#c4c2b4"/><rect x="0" y="4" width="1" height="1" fill="#c4c2b4"/><rect x="1" y="4" width="1" height="1" fill="#c4c2b4"/><rect x="2" y="4" width="1" height="1" fill="#c4c2b4"/><rect x="6" y="4" width="1" height="1" fill="#c4c2b4"/><rect x="7" y="4" width="1" height="1" fill="#c4c2b4"/><rect x="8" y="4" width="1" height="1" fill="#c4c2b4"/><rect x="1" y="5" width="1" height="1" fill="#c4c2b4"/><rect x="7" y="5" width="1" height="1" fill="#c4c2b4"/></svg>
<div class="a" style="left:739px;top:511px;width:16px;height:16px;border:1px solid #fff;border-radius:3px;background:linear-gradient(#f2f1ec,#e9e8e0)"></div><div class="a" style="left:740px;top:527px;width:14px;height:1px;background:#e0decf"></div><svg style="left:742px;top:517px" width="9" height="6" shape-rendering="crispEdges"><rect x="1" y="0" width="1" height="1" fill="#c4c2b4"/><rect x="7" y="0" width="1" height="1" fill="#c4c2b4"/><rect x="0" y="1" width="1" height="1" fill="#c4c2b4"/><rect x="1" y="1" width="1" height="1" fill="#c4c2b4"/><rect x="2" y="1" width="1" height="1" fill="#c4c2b4"/><rect x="6" y="1" width="1" height="1" fill="#c4c2b4"/><rect x="7" y="1" width="1" height="1" fill="#c4c2b4"/><rect x="8" y="1" width="1" height="1" fill="#c4c2b4"/><rect x="1" y="2" width="1" height="1" fill="#c4c2b4"/><rect x="2" y="2" width="1" height="1" fill="#c4c2b4"/><rect x="3" y="2" width="1" height="1" fill="#c4c2b4"/><rect x="5" y="2" width="1" height="1" fill="#c4c2b4"/><rect x="6" y="2" width="1" height="1" fill="#c4c2b4"/><rect x="7" y="2" width="1" height="1" fill="#c4c2b4"/><rect x="2" y="3" width="1" height="1" fill="#c4c2b4"/><rect x="3" y="3" width="1" height="1" fill="#c4c2b4"/><rect x="4" y="3" width="1" height="1" fill="#c4c2b4"/><rect x="5" y="3" width="1" height="1" fill="#c4c2b4"/><rect x="6" y="3" width="1" height="1" fill="#c4c2b4"/><rect x="3" y="4" width="1" height="1" fill="#c4c2b4"/><rect x="4" y="4" width="1" height="1" fill="#c4c2b4"/><rect x="5" y="4" width="1" height="1" fill="#c4c2b4"/><rect x="4" y="5" width="1" height="1" fill="#c4c2b4"/></svg>
<div class="a" style="left:82px;top:530px;width:2px;height:36px;background:linear-gradient(90deg,#a0a0a0 0,#a0a0a0 1px,#b4b4b4 1px)"></div><div class="a" style="left:82px;top:529px;width:2px;height:1px;background:#fff"></div>
<svg style="left:105px;top:539px" width="14" height="14"><defs><linearGradient id="gpl" x1="0" y1="0" x2="1" y2="1"><stop offset="0" stop-color="#90ec70"/><stop offset="0.5" stop-color="#40c030"/><stop offset="1" stop-color="#089010"/></linearGradient></defs><path d="M4.5 0.5 H9.5 V4.5 H13.5 V9.5 H9.5 V13.5 H4.5 V9.5 H0.5 V4.5 H4.5Z" fill="url(#gpl)" stroke="#1e4a1e" stroke-width="1"/></svg>
<svg style="left:136px;top:543px" width="14" height="6"><defs><linearGradient id="gmi" x1="0" y1="0" x2="0" y2="1"><stop offset="0" stop-color="#80e060"/><stop offset="1" stop-color="#10a010"/></linearGradient></defs><rect x="0.5" y="0.5" width="13" height="5" fill="url(#gmi)" stroke="#1e4a1e" stroke-width="1"/></svg>
<svg style="left:169.5px;top:538.2px" width="17" height="17"><g transform="translate(8.5,8.5)"><rect x="-1.1" y="-8" width="2.2" height="3" fill="#88a4c0" transform="rotate(0)"/><rect x="-1.1" y="-8" width="2.2" height="3" fill="#88a4c0" transform="rotate(30)"/><rect x="-1.1" y="-8" width="2.2" height="3" fill="#88a4c0" transform="rotate(60)"/><rect x="-1.1" y="-8" width="2.2" height="3" fill="#88a4c0" transform="rotate(90)"/><rect x="-1.1" y="-8" width="2.2" height="3" fill="#88a4c0" transform="rotate(120)"/><rect x="-1.1" y="-8" width="2.2" height="3" fill="#88a4c0" transform="rotate(150)"/><rect x="-1.1" y="-8" width="2.2" height="3" fill="#88a4c0" transform="rotate(180)"/><rect x="-1.1" y="-8" width="2.2" height="3" fill="#88a4c0" transform="rotate(210)"/><rect x="-1.1" y="-8" width="2.2" height="3" fill="#88a4c0" transform="rotate(240)"/><rect x="-1.1" y="-8" width="2.2" height="3" fill="#88a4c0" transform="rotate(270)"/><rect x="-1.1" y="-8" width="2.2" height="3" fill="#88a4c0" transform="rotate(300)"/><rect x="-1.1" y="-8" width="2.2" height="3" fill="#88a4c0" transform="rotate(330)"/><circle r="6.3" fill="#a8c0d8" stroke="#8aa6c2" stroke-width="0.6"/><circle r="4.1" fill="none" stroke="#6a8aaa" stroke-width="1.2"/><circle r="2.9" fill="#fafcff"/></g></svg>
<svg style="left:193px;top:546px" width="8" height="5"><path d="M0 0 H7 L3.5 4Z" fill="#000"/></svg>
</body></html>
